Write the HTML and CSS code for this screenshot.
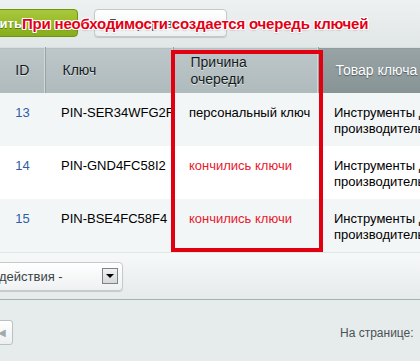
FILE: index.html
```html
<!doctype html>
<html lang="ru">
  <head>
    <meta charset="UTF-8" />
    <meta name="viewport" content="width=device-width, initial-scale=1.0" />
    <title>Ключи</title>
    <link rel="stylesheet" href="styles.css">
  </head>
  <body>
    <div class="page">
      <div class="toolbar">
        <button class="btn btn-green">Добавить</button>
        <button class="btn btn-light">Генерировать</button>
      </div>

      <table class="grid">
        <colgroup>
          <col class="c-id" />
          <col class="c-key" />
          <col class="c-reason" />
          <col class="c-product" />
        </colgroup>
        <thead>
          <tr>
            <th class="center">ID</th>
            <th>Ключ</th>
            <th>Причина<br />очереди</th>
            <th class="dark">Товар ключа</th>
          </tr>
        </thead>
        <tbody>
          <tr class="odd">
            <td class="center id">13</td>
            <td class="clip">PIN-SER34WFG2R</td>
            <td>персональный ключ</td>
            <td class="clip">Инструменты для<br />производительности</td>
          </tr>
          <tr>
            <td class="center id">14</td>
            <td class="clip">PIN-GND4FC58I2</td>
            <td class="warn">кончились ключи</td>
            <td class="clip">Инструменты для<br />производительности</td>
          </tr>
          <tr class="odd">
            <td class="center id">15</td>
            <td class="clip">PIN-BSE4FC58F4</td>
            <td class="warn">кончились ключи</td>
            <td class="clip">Инструменты для<br />производительности</td>
          </tr>
        </tbody>
      </table>

      <div class="footer">
        <div class="select">
          <span>- действия -</span>
          <span class="arrow"></span>
        </div>
      </div>

      <div class="nav">
        <button class="nav-btn">&#9664;</button>
        <span class="per-page">На странице:</span>
        <span class="per-select"></span>
      </div>

      <div class="note">При необходимости создается очередь ключей</div>
      <div class="frame"></div>
    </div>
  </body>
</html>
```

FILE: styles.css
```css
html,
body {
  margin: 0;
  padding: 0;
}
body {
  font-family: "Liberation Sans", Arial, sans-serif;
  font-size: 13px;
  color: #000;
  background: #e6ebec;
  overflow: hidden;
}
.page {
  position: relative;
  width: 420px;
  height: 361px;
  overflow: hidden;
}
.toolbar {
  height: 47px;
  display: flex;
  align-items: flex-start;
  gap: 16px;
  padding-top: 9px;
  box-sizing: border-box;
  background: linear-gradient(#eef1f2, #e1e6e7);
}
.btn {
  height: 28px;
  border-radius: 4px;
  font-family: inherit;
  font-size: 13px;
  font-weight: bold;
  padding: 0;
}
.btn-green {
  width: 124px;
  margin-left: -46px;
  text-align: left;
  padding-left: 4px;
  color: #fff;
  border: 1px solid #6f9612;
  background: linear-gradient(#a8c83a, #86ad1c);
  text-shadow: 0 1px 0 #5a7a0c;
}
.btn-light {
  width: 133px;
  color: #3f4b4e;
  border: 1px solid #c3cacc;
  background: linear-gradient(#ffffff, #edf0f1);
  box-shadow: 0 1px 1px rgba(0, 0, 0, 0.15);
  font-weight: normal;
  text-align: left;
  padding-left: 14px;
}
.grid {
  border-collapse: collapse;
  table-layout: fixed;
  width: 520px;
}
.c-id {
  width: 45px;
}
.c-key {
  width: 128px;
}
.c-reason {
  width: 145px;
}
.c-product {
  width: 202px;
}
.grid th {
  height: 45px;
  padding: 0 0 0 17px;
  text-align: left;
  font-size: 14px;
  font-weight: normal;
  line-height: 17px;
  color: #141a1c;
  text-shadow: 0 1px 0 rgba(255, 255, 255, 0.6);
  background: linear-gradient(#bdc7c9, #afbabc);
  border-top: 1px solid #d8dfe0;
  border-right: 1px solid #97a3a5;
  box-shadow: inset -1px 0 0 #cfd7d8;
}
.grid th.center {
  padding-left: 0;
  text-align: center;
}
.grid th.dark {
  color: #fff;
  text-shadow: 0 1px 1px #505a5c;
  background: linear-gradient(#98a3a5, #879395);
  border-right: none;
  box-shadow: none;
}
.grid td {
  height: 53px;
  padding: 12px 0 0 16px;
  box-sizing: border-box;
  vertical-align: top;
  line-height: 16px;
  white-space: nowrap;
  background: #fff;
}
.grid tr.odd td {
  background: #f3f6f7;
}
.grid td.center {
  padding-left: 0;
  text-align: center;
}
.grid td.id {
  color: #2f5ea6;
}
.grid td.clip {
  overflow: hidden;
}
.grid td.warn {
  color: #e8192c;
}
.footer {
  height: 46px;
  display: flex;
  align-items: center;
  background: linear-gradient(#f7f9f9, #e5eaeb);
  border-top: 1px solid #e1e6e7;
  border-bottom: 1px solid #a7b0b2;
}
.select {
  width: 133px;
  height: 29px;
  margin-left: -10px;
  flex-shrink: 0;
  box-sizing: border-box;
  display: flex;
  align-items: center;
  justify-content: space-between;
  padding: 0 4px 0 0;
  border: 1px solid #c4cbcd;
  border-radius: 4px;
  background: linear-gradient(#ffffff, #eef1f2);
  box-shadow: 0 1px 1px rgba(0, 0, 0, 0.15);
  color: #3b4447;
}
.select .arrow {
  width: 16px;
  height: 16px;
  box-sizing: border-box;
  border: 1px solid #7c8486;
  background: linear-gradient(#f1f2f2, #d5d9da);
  position: relative;
}
.select .arrow::after {
  content: "";
  position: absolute;
  left: 3px;
  top: 5px;
  border-left: 4px solid transparent;
  border-right: 4px solid transparent;
  border-top: 4px solid #000;
}
.nav {
  display: flex;
  align-items: center;
  height: 62px;
  padding-top: 2px;
  box-sizing: border-box;
}
.nav-btn {
  flex-shrink: 0;
  width: 28px;
  height: 25px;
  margin-left: -15px;
  border: 1px solid #b9c1c3;
  border-radius: 3px;
  background: linear-gradient(#ffffff, #eceff0);
  color: #a1a9ab;
  font-size: 10px;
  padding: 0 0 0 12px;
  text-align: left;
}
.per-page {
  flex-shrink: 0;
  white-space: nowrap;
  margin-left: 327px;
  margin-top: 2px;
  font-size: 12px;
  color: #4a5255;
}
.per-select {
  flex-shrink: 0;
  width: 30px;
  height: 24px;
  margin-left: 10px;
  border: 1px solid #c4cbcd;
  border-radius: 3px;
  background: #fff;
}
.note {
  position: absolute;
  left: 22px;
  top: 15px;
  font-size: 15px;
  font-weight: bold;
  letter-spacing: -0.2px;
  color: #e30016;
  white-space: nowrap;
  text-shadow: 1px 0 0 #fff, -1px 0 0 #fff, 0 1px 0 #fff, 0 -1px 0 #fff,
    1px 1px 0 #fff, -1px -1px 0 #fff, 1px -1px 0 #fff, -1px 1px 0 #fff,
    0 1px 2px rgba(0, 0, 0, 0.4);
}
.frame {
  position: absolute;
  left: 171px;
  top: 50px;
  width: 152px;
  height: 202px;
  box-sizing: border-box;
  border: 4px solid #e10010;
}
```
